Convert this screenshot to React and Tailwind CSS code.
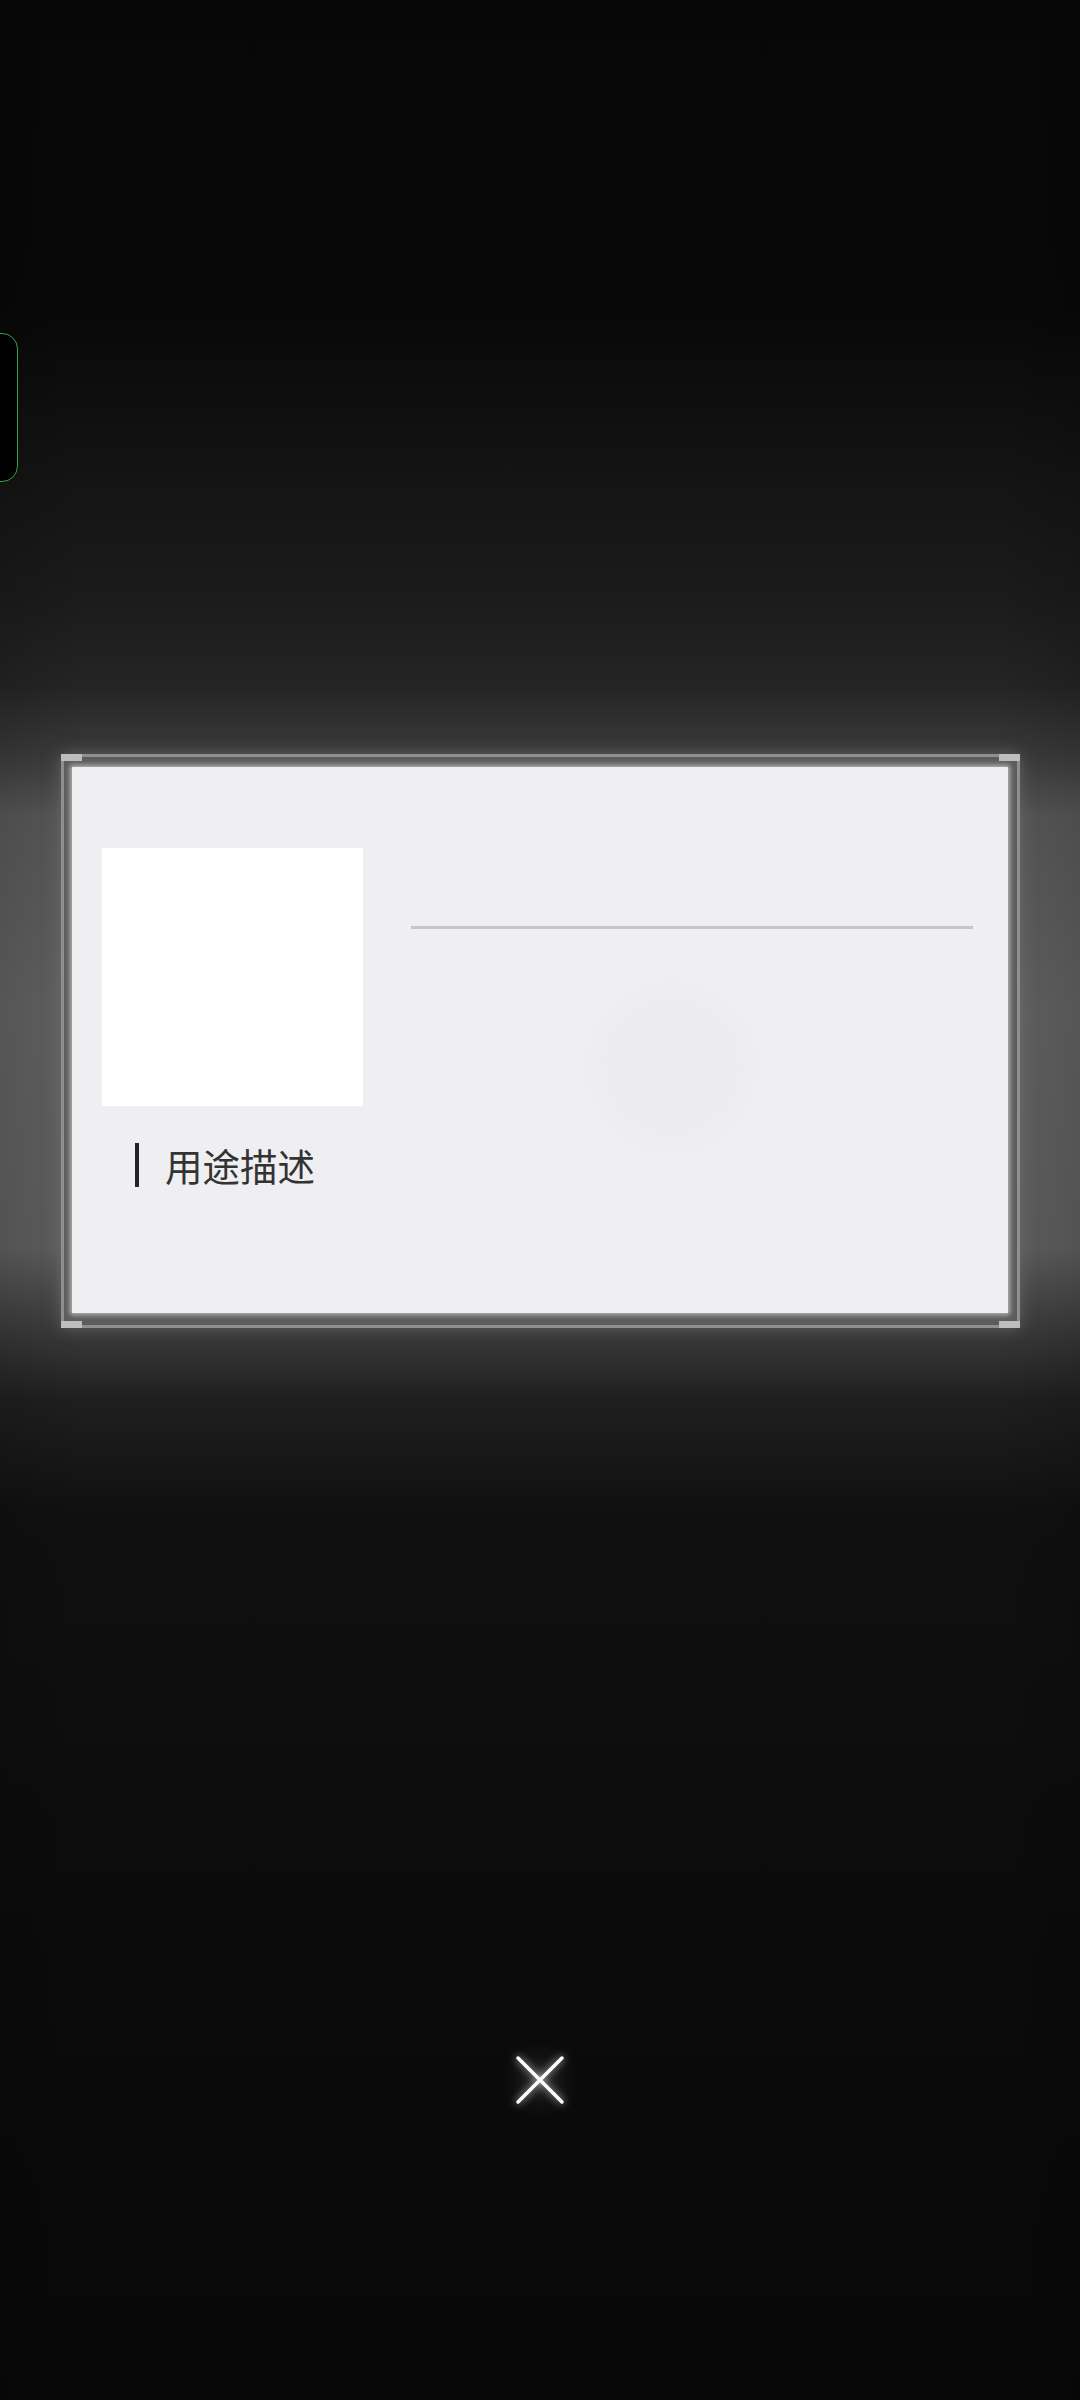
import React from "react";

function Corner({ pos }) {
  const map = {
    tl: "-left-[3px] -top-[3px]",
    tr: "-right-[3px] -top-[3px]",
    bl: "-left-[3px] -bottom-[3px]",
    br: "-right-[3px] -bottom-[3px]",
  };
  return <div className={`absolute bg-[#bdbdbd] w-[21px] h-[7px] ${map[pos]}`} />;
}

export default function App() {
  return (
    <div
      className="relative w-[1080px] h-[2400px] overflow-hidden flex flex-col bg-[linear-gradient(180deg,#070707_0%,#080808_13%,#141414_20%,#1b1b1b_25%,#242424_28.5%,#3a3a3a_31.4%,#575757_34%,#616161_42%,#5e5e5e_52%,#3c3c3c_55.3%,#1f1f1f_58.3%,#101010_63%,#0b0b0b_80%,#080808_100%)]"
      style={{ fontFamily: '"Noto Sans CJK SC", "Noto Sans", sans-serif' }}
    >
      {/* side vignette */}
      <div className="pointer-events-none absolute inset-0 bg-[linear-gradient(90deg,rgba(0,0,0,0.12)_0%,rgba(0,0,0,0)_8%,rgba(0,0,0,0)_92%,rgba(0,0,0,0.12)_100%)]" />

      {/* green floating handle */}
      <div className="relative mt-[333px] -ml-[24px] w-[42px] h-[149px] rounded-[16px] border-[1.5px] border-[#3a9e48] bg-black" />

      {/* frame */}
      <div className="relative mt-[272px] ml-[61px] w-[959px] h-[574px] border-[3px] border-[#8f8f8f] bg-[#5c5c5c] pt-[10px] pb-[12px] pl-[8px] pr-[9px] shadow-[0_0_14px_rgba(120,120,120,0.6)]">
        <Corner pos="tl" />
        <Corner pos="tr" />
        <Corner pos="bl" />
        <Corner pos="br" />
        <div className="relative w-full h-full bg-[#efeff2] shadow-[0_0_5px_2px_rgba(255,255,255,0.55)] overflow-hidden">
          {/* faint ellipse */}
          <div className="pointer-events-none absolute left-[525px] top-[225px] w-[150px] h-[150px] rounded-full bg-[#ececef] blur-[8px]" />
          <div className="relative flex pt-[81px] pl-[30px] pr-[35px]">
            <div className="flex flex-col">
              <div className="w-[261px] h-[258px] bg-white" />
              <div className="flex items-center mt-[37px] ml-[33px]">
                <div className="w-[4px] h-[44px] bg-[#232323]" />
                <span className="ml-[26px] text-[37.5px] leading-[44px] text-[#333333]">用途描述</span>
              </div>
            </div>
            <div className="flex-1 ml-[48px] pt-[78px]">
              <div className="h-[3px] bg-[#c6c6c8]" />
            </div>
          </div>
        </div>
      </div>

      {/* close button */}
      <div className="mt-[716px] self-center w-[72px] h-[72px] flex items-center justify-center bg-[radial-gradient(circle,rgba(40,40,40,0.9)_0%,rgba(20,20,20,0.6)_50%,rgba(0,0,0,0)_75%)]">
        <svg width="50" height="50" viewBox="0 0 50 50" className="drop-shadow-[0_0_4px_rgba(255,255,255,0.8)]">
          <path d="M3 3 L47 47 M47 3 L3 47" stroke="#ffffff" strokeWidth="3.5" strokeLinecap="round" />
        </svg>
      </div>
    </div>
  );
}
